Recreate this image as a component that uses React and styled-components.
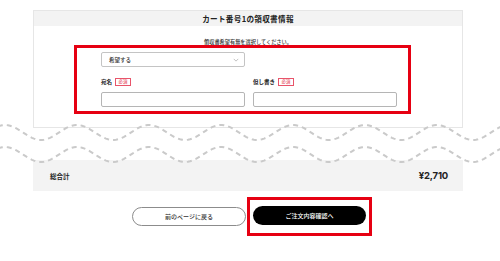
import React from "react";
import styled, { createGlobalStyle } from "styled-components";

const GlobalStyle = createGlobalStyle`
  body {
    margin: 0;
    background: #fff;
    font-family: "Noto Sans CJK JP", "Noto Sans", sans-serif;
    color: #222;
  }
`;

function wavePath(center, amp, period, phase) {
  let d = "";
  for (let x = -10; x <= 510; x += 2) {
    const y = center - amp * Math.cos((2 * Math.PI * (x - phase)) / period);
    d += (x === -10 ? "M" : "L") + x + " " + y.toFixed(2) + " ";
  }
  return d;
}

export default function App() {
  return (
    <Page>
      <GlobalStyle />
      <Card>
        <CardHeader>カート番号1の領収書情報</CardHeader>
        <CardBody>
          <Lead>領収書希望有無を選択してください。</Lead>
          <Highlight>
            <Form>
              <Select>
                <span>希望する</span>
                <Chevron viewBox="0 0 8 5">
                  <path d="M1 1 L4 4 L7 1" fill="none" stroke="#999" strokeWidth="0.8" />
                </Chevron>
              </Select>
              <Fields>
                <Field>
                  <Label>
                    宛名<Badge>必須</Badge>
                  </Label>
                  <Input />
                </Field>
                <Field>
                  <Label>
                    但し書き<Badge>必須</Badge>
                  </Label>
                  <Input />
                </Field>
              </Fields>
            </Form>
          </Highlight>
        </CardBody>
      </Card>

      <Divider>
        <svg width="500" height="32" viewBox="0 0 500 32">
          <WavePath d={wavePath(4.5, 7.5, 72, 77)} />
          <WavePath d={wavePath(26.5, 7.5, 72, 77)} />
        </svg>
      </Divider>

      <TotalBar>
        <TotalLabel>総合計</TotalLabel>
        <TotalPrice>¥2,710</TotalPrice>
      </TotalBar>

      <Actions>
        <BackButton>前のページに戻る</BackButton>
        <Highlight as="div" $tight>
          <NextButton>ご注文内容確認へ</NextButton>
        </Highlight>
      </Actions>
    </Page>
  );
}

const Page = styled.div`
  width: 500px;
  height: 261px;
  overflow: hidden;
  padding-top: 10px;
  box-sizing: border-box;
`;

const Card = styled.div`
  margin-left: 33px;
  width: 430px;
  height: 118px;
  box-sizing: border-box;
  border: 1px solid #e6e6e6;
  background: #fff;
`;

const CardHeader = styled.div`
  height: 15px;
  background: #f3f3f3;
  font-size: 7.6px;
  font-weight: 700;
  line-height: 15px;
  text-align: center;
  letter-spacing: 0.3px;
`;

const CardBody = styled.div`
  display: flex;
  flex-direction: column;
  align-items: flex-start;
  padding-top: 13px;
`;

const Lead = styled.div`
  align-self: center;
  font-size: 5.2px;
  font-weight: 500;
  line-height: 6px;
  color: #333;
`;

const Highlight = styled.div`
  border: 3px solid #e60012;
  box-sizing: border-box;
  ${({ $tight }) =>
    $tight
      ? `padding: 6px 3px 8px 3px;`
      : `margin-left: 40px; width: 337px; padding: 4px 11px 4px 24px;`}
`;

const Form = styled.div`
  display: flex;
  flex-direction: column;
  width: 296px;
`;

const Select = styled.div`
  display: flex;
  align-items: center;
  justify-content: space-between;
  width: 144px;
  height: 15px;
  box-sizing: border-box;
  padding: 0 5px 0 7px;
  border: 1px solid #c4c4c4;
  border-radius: 2px;
  font-size: 5.5px;
  font-weight: 500;
  color: #333;
`;

const Chevron = styled.svg`
  width: 6px;
  height: 4px;
`;

const Fields = styled.div`
  display: grid;
  grid-template-columns: 144px 144px;
  column-gap: 8px;
  margin-top: 11px;
`;

const Field = styled.div`
  display: flex;
  flex-direction: column;
`;

const Label = styled.div`
  display: flex;
  align-items: center;
  gap: 3px;
  height: 8px;
  font-size: 5.5px;
  font-weight: 700;
  margin-bottom: 6px;
`;

const Badge = styled.span`
  display: inline-block;
  border: 0.8px solid #e8546a;
  color: #e8546a;
  font-size: 4.4px;
  font-weight: 500;
  line-height: 5.5px;
  padding: 0 2.5px;
`;

const Input = styled.div`
  height: 15px;
  box-sizing: border-box;
  border: 1px solid #b5b5b5;
  border-radius: 2px;
  background: #fff;
`;

const Divider = styled.div`
  height: 32px;
  line-height: 0;

  svg {
    overflow: visible;
  }
`;

const WavePath = styled.path`
  fill: none;
  stroke: #cacaca;
  stroke-width: 2;
  stroke-dasharray: 5 4;
`;

const TotalBar = styled.div`
  margin-left: 33px;
  width: 430px;
  height: 31px;
  box-sizing: border-box;
  background: #f3f3f3;
  display: flex;
  align-items: center;
  justify-content: space-between;
  padding: 0 15px 0 17px;
`;

const TotalLabel = styled.span`
  font-size: 6.5px;
  font-weight: 700;
`;

const TotalPrice = styled.span`
  font-family: "Inter", "Noto Sans", sans-serif;
  font-size: 9.5px;
  font-weight: 700;
  letter-spacing: -0.2px;
`;

const Actions = styled.div`
  display: flex;
  align-items: center;
  margin-top: 6px;
  padding-left: 132px;
  gap: 1px;
`;

const BackButton = styled.button`
  width: 114px;
  height: 19px;
  border: 1px solid #8c8c8c;
  border-radius: 10px;
  background: #fff;
  font-family: inherit;
  font-size: 6px;
  font-weight: 500;
  color: #333;
  padding: 0;
`;

const NextButton = styled.button`
  display: block;
  width: 113px;
  height: 19px;
  border: none;
  border-radius: 10px;
  background: #000;
  color: #fff;
  font-family: inherit;
  font-size: 6px;
  font-weight: 500;
  padding: 0;
`;
